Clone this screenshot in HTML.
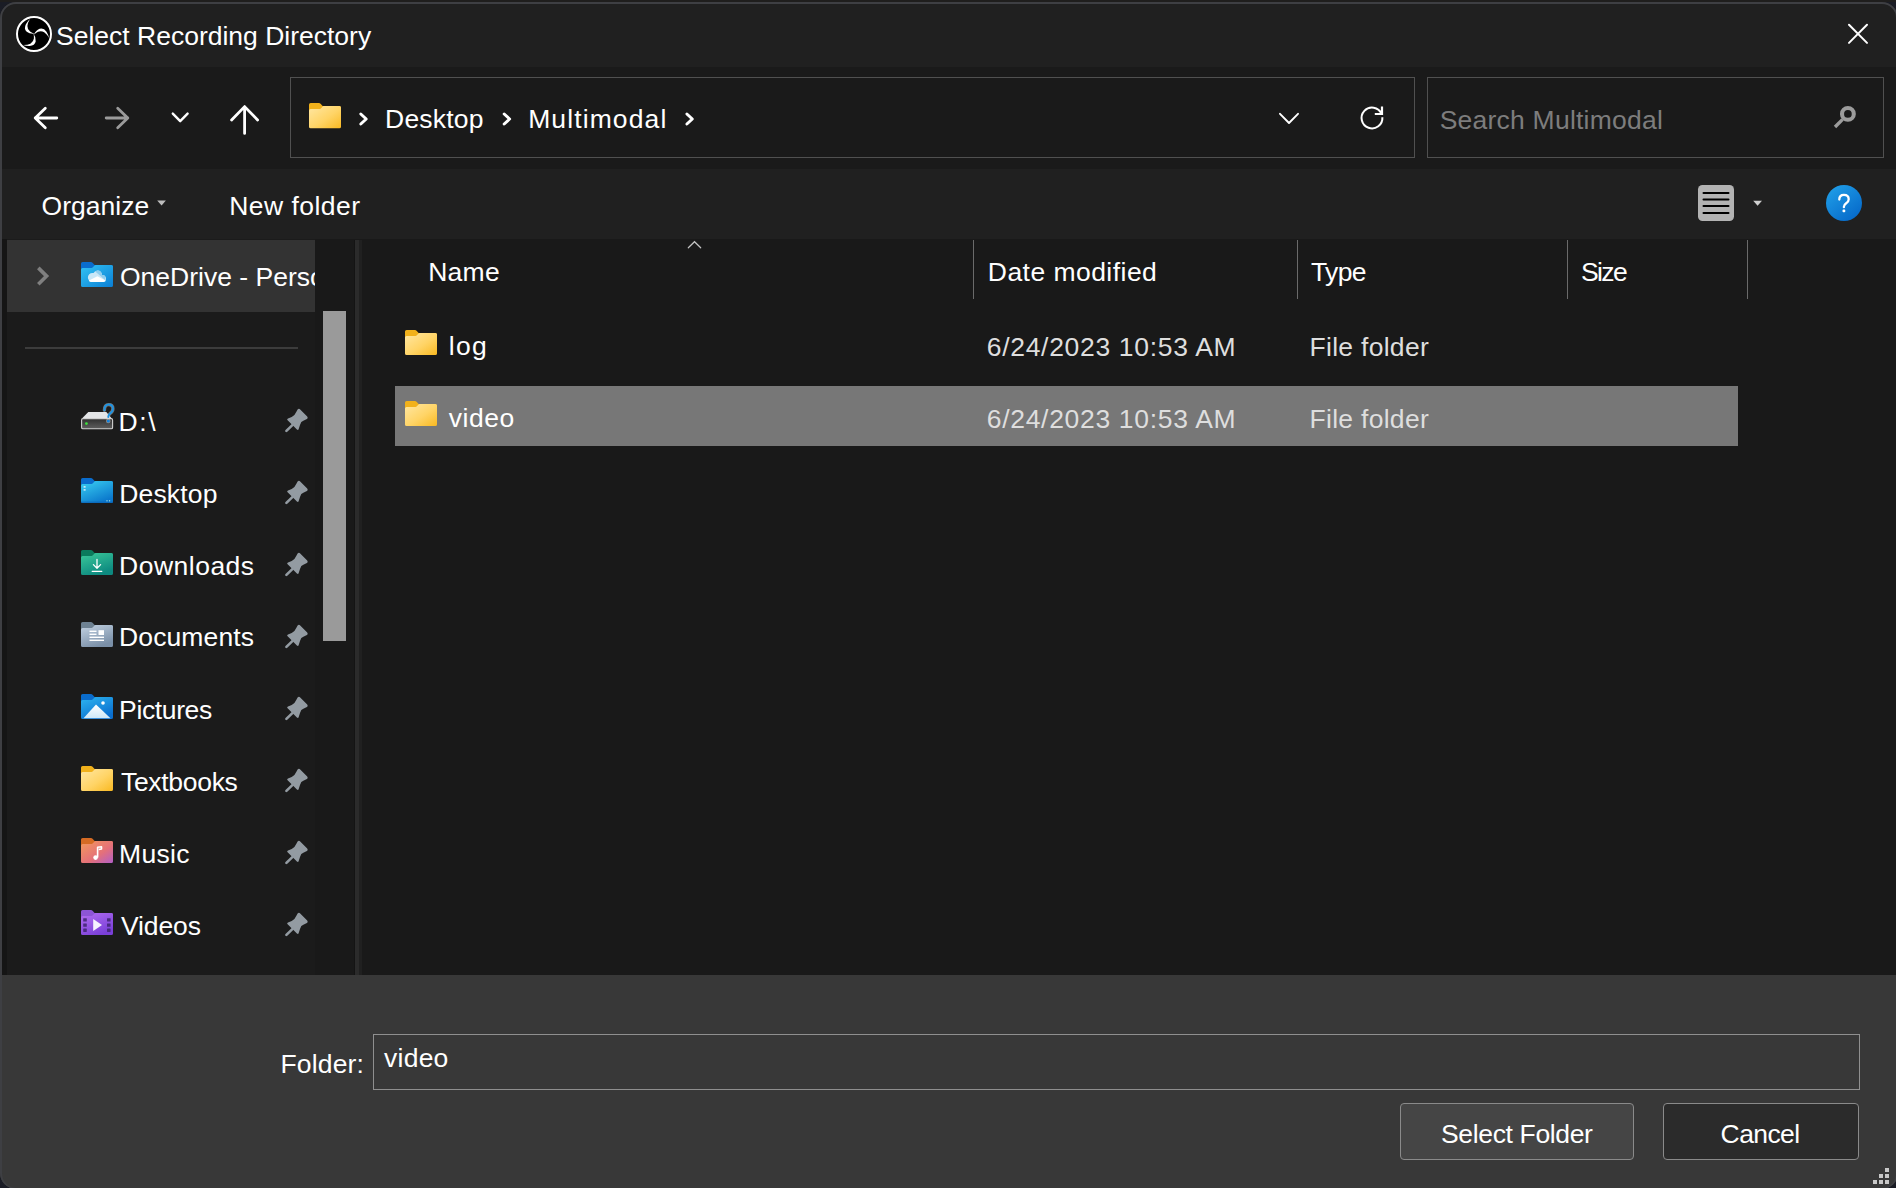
<!DOCTYPE html>
<html><head><meta charset="utf-8">
<style>
html,body{margin:0;padding:0;}
body{width:1896px;height:1188px;overflow:hidden;background:#1a1c25;position:relative;font-family:"Liberation Sans",sans-serif;}
.win{position:absolute;left:0;top:2px;width:1898px;height:1186.5px;border-radius:16px;background:#202020;overflow:hidden;}
.abs{position:absolute;}
.t{position:absolute;font-size:26.5px;line-height:30px;height:30px;color:#fff;white-space:nowrap;}
.g{color:#dedede;}
.band{position:absolute;left:0;width:1896px;}
svg{position:absolute;overflow:visible;}
</style></head><body>
<div class="win">
  <div class="band" style="top:0;height:65px;background:#202020;"></div>
  <div class="band" style="top:65px;height:102px;background:#1a1a1a;"></div>
  <div class="band" style="top:167px;height:70px;background:#202020;"></div>
  <div class="band" style="top:237px;height:736px;background:#191919;"></div>
  <div class="band" style="top:973px;height:230px;background:#383838;"></div>
</div>
<div class="abs" style="left:0;top:0;width:1896px;height:2px;background:#1f1e1d;"></div>
<div class="abs" style="left:0;top:2px;width:1898px;height:1186.5px;border-radius:16px;border:2px solid #3e3f43;border-bottom-width:0.6px;box-sizing:border-box;"></div>

<!-- ===== TITLE BAR ===== -->
<svg style="left:0;top:0" width="70" height="70" viewBox="0 0 70 70">
  <circle cx="34" cy="34" r="17" fill="#000" stroke="#fff" stroke-width="2"/>
  <g fill="#fff">
    <path id="bl" d="M33.4 33.6 Q36.3 37.5 35.7 41.4 Q34.8 45.6 29.6 45.9 Q26.2 46 23 45 Q27.4 45.1 30.4 43.7 Q33.5 42 33.9 38.6 Q34.2 36.4 33.4 33.6Z"/>
    <use href="#bl" transform="rotate(120 34 34)"/>
    <use href="#bl" transform="rotate(240 34 34)"/>
  </g>
</svg>
<div class="t" style="left:56px;top:21px;letter-spacing:0px;">Select Recording Directory</div>
<svg style="left:1840px;top:16px" width="36" height="36" viewBox="0 0 36 36">
  <path d="M9 8.7 L27 26.9 M27 8.7 L9 26.9" stroke="#fff" stroke-width="2" stroke-linecap="round"/>
</svg>

<!-- ===== NAV BAR ===== -->
<svg style="left:0;top:90px" width="280" height="60" viewBox="0 90 280 60">
  <g fill="none" stroke-width="2.6" stroke-linecap="round" stroke-linejoin="round">
    <path d="M35.2 118 H56.8 M45.3 108.2 L35.2 118 L45.3 127.8" stroke="#fff" stroke-width="2.8"/>
    <path d="M106.2 118 H127.8 M117.7 108.2 L127.8 118 L117.7 127.8" stroke="#9b9b9b" stroke-width="2.8"/>
    <path d="M172.8 113.6 L180.2 121.2 L187.6 113.6" stroke="#fff" stroke-width="2.4"/>
    <path d="M244.6 107 V133.4 M231.6 120 L244.6 106.6 L257.6 120" stroke="#fff" stroke-width="2.8"/>
  </g>
</svg>
<div class="abs" style="left:290px;top:77px;width:1123px;height:79px;border:1px solid #505050;"></div>
<div class="abs" style="left:1427px;top:77px;width:455px;height:79px;border:1px solid #505050;"></div>
<svg width="0" height="0" style="left:0;top:0">
  <defs>
    <linearGradient id="gy" x1="0" y1="0" x2="1" y2="1">
      <stop offset="0" stop-color="#ffe7a3"/><stop offset="0.55" stop-color="#ffd466"/><stop offset="1" stop-color="#f9b921"/>
    </linearGradient>
    <symbol id="fold" viewBox="0 0 32 25">
      <path d="M1.6 0 H9.8 Q11 0 11.8 0.9 L13.6 3 H30.4 Q32 3 32 4.6 V10 H0 V1.6 Q0 0 1.6 0Z" fill="#f1b11b"/>
      <path d="M0 7.6 Q0 6 1.6 6 H10.6 Q11.6 6 12.6 4.6 L13.2 3.8 Q13.8 3 14.8 3 H30.4 Q32 3 32 4.6 V23.4 Q32 25 30.4 25 H1.6 Q0 25 0 23.4Z" fill="url(#gy)"/>
    </symbol>
    <linearGradient id="gb" x1="0" y1="0" x2="1" y2="1">
      <stop offset="0" stop-color="#33c3f3"/><stop offset="1" stop-color="#0a7fd6"/>
    </linearGradient>
    <symbol id="foldb" viewBox="0 0 32 25">
      <path d="M1.6 0 H9.8 Q11 0 11.8 0.9 L13.6 3 H30.4 Q32 3 32 4.6 V10 H0 V1.6 Q0 0 1.6 0Z" fill="#0a6ccc"/>
      <path d="M0 7.6 Q0 6 1.6 6 H10.6 Q11.6 6 12.6 4.6 L13.2 3.8 Q13.8 3 14.8 3 H30.4 Q32 3 32 4.6 V23.4 Q32 25 30.4 25 H1.6 Q0 25 0 23.4Z" fill="url(#gb)"/>
    </symbol>
    <symbol id="pin" viewBox="0 0 40 40">
      <path d="M19.6 9.6 Q20.9 8.2 22.2 9.5 L29.2 16.6 Q30.5 18.1 28.9 19.1 Q25.6 20.4 23.3 22 Q21.8 25 20.7 29 Q20.2 30.6 18.9 29.5 L9.6 20.3 Q8.4 19 10 18.5 Q14 17.4 16.4 15 Q18.2 12.4 19.6 9.6Z" fill="#939ba2"/>
      <path d="M14.6 24.9 L8.4 30.9" stroke="#939ba2" stroke-width="2.6" stroke-linecap="round"/>
    </symbol>
  </defs>
</svg>

<!-- breadcrumb -->
<svg style="left:309px;top:103px" width="32" height="25.5" viewBox="0 0 32 25" preserveAspectRatio="none"><use href="#fold"/></svg>
<svg style="left:0;top:0" width="1896" height="200" viewBox="0 0 1896 200">
  <g fill="none" stroke="#fff" stroke-width="3" stroke-linecap="round" stroke-linejoin="round">
    <path d="M360.8 114 L366.2 119 L360.8 124"/>
    <path d="M504.2 114 L509.6 119 L504.2 124"/>
    <path d="M686.9 114 L692.3 119 L686.9 124"/>
  </g>
  <path d="M1280 113.8 L1289 123 L1298 113.8" fill="none" stroke="#fff" stroke-width="1.9" stroke-linecap="round" stroke-linejoin="round"/>
  <path d="M1382.37 117.27 A10.4 10.4 0 1 1 1381.50 113.77" fill="none" stroke="#fff" stroke-width="2"/>
  <path d="M1382 106.6 V114 H1374.8" fill="none" stroke="#fff" stroke-width="2.2" stroke-linecap="butt" stroke-linejoin="miter"/>
  <circle cx="1847.9" cy="113.9" r="5.9" fill="none" stroke="#9c9c9c" stroke-width="4.1"/>
  <path d="M1842.6 119.4 L1835 127" stroke="#9c9c9c" stroke-width="3.4" stroke-linecap="butt"/>
</svg>
<div class="t" style="left:385.1px;top:104px;letter-spacing:0.2px;">Desktop</div>
<div class="t" style="left:528.2px;top:104px;letter-spacing:1.11px;">Multimodal</div>
<div class="t" style="left:1439.7px;top:105px;color:#7d7d7d;letter-spacing:0.23px;">Search Multimodal</div>

<!-- ===== TOOLBAR ===== -->
<div class="t" style="left:41.6px;top:191px;letter-spacing:0px;">Organize</div>
<svg style="left:0;top:0" width="200" height="220"><path d="M157.2 200.6 H165.9 L161.55 205.6Z" fill="#bdbdbd"/></svg>
<div class="t" style="left:229.2px;top:191px;letter-spacing:0.47px;">New folder</div>
<svg style="left:1690px;top:180px" width="200" height="50" viewBox="1690 180 200 50">
  <rect x="1698" y="185" width="36" height="36" rx="4.5" fill="#b3b3b3"/>
  <g stroke="#000" stroke-width="2" stroke-linecap="round">
    <path d="M1703.5 192.9 H1728.5 M1703.5 199.5 H1728.5 M1703.5 206.1 H1728.5 M1703.5 212.9 H1728.5"/>
  </g>
  <path d="M1753.2 200.8 H1762 L1757.6 205.8Z" fill="#cfcfcf"/>
  <defs><linearGradient id="hb" x1="0" y1="0" x2="0.8" y2="1"><stop offset="0" stop-color="#22a3ea"/><stop offset="1" stop-color="#0568c9"/></linearGradient></defs>
  <circle cx="1844" cy="203" r="18" fill="url(#hb)"/>
  <path d="M1839.3 199.6 Q1839.3 194.8 1843.9 194.8 Q1848.7 194.8 1848.7 199.2 Q1848.7 201.6 1846.2 203.3 Q1844 204.8 1843.9 206.8 V207.2" fill="none" stroke="#fff" stroke-width="2.3" stroke-linecap="round"/>
  <rect x="1842.5" y="209.6" width="2.8" height="2.6" rx="0.9" fill="#fff"/>
</svg>

<!-- ===== NAV PANE ===== -->
<div class="abs" style="left:2px;top:239px;width:5px;height:736px;background:#151515;"></div>
<div class="abs" style="left:7px;top:239px;width:308px;height:736px;background:#1b1b1b;"></div>
<div class="abs" style="left:7px;top:240px;width:308px;height:71.5px;background:#333333;"></div>
<svg style="left:0;top:0" width="60" height="300"><path d="M38.3 267.9 L46.6 276.1 L38.3 284.3" fill="none" stroke="#7f7f7f" stroke-width="3.6" stroke-linecap="butt" stroke-linejoin="miter"/></svg>
<svg style="left:81px;top:262px" width="32" height="25" viewBox="0 0 32 25">
  <use href="#foldb"/>
  <defs><clipPath id="cl"><circle cx="11.4" cy="15.4" r="4.5"/><circle cx="16.6" cy="12.8" r="4.4"/><circle cx="21.4" cy="16.4" r="3.5"/><rect x="7.6" y="15" width="17.3" height="4.9" rx="2.4"/></clipPath></defs>
  <g clip-path="url(#cl)">
    <rect x="0" y="0" width="32" height="25" fill="#c9e7f7"/>
    <path d="M12.5 8 L24 8 L24 18 Z" fill="#8fcdee"/>
    <path d="M4 20.5 L16.4 14.2 L28 20.5Z" fill="#fff"/>
  </g>
</svg>
<div class="abs" style="left:120px;top:262px;width:195px;height:30px;overflow:hidden;"><div class="t" style="left:0;top:0;">OneDrive - Personal</div></div>
<div class="abs" style="left:25px;top:347px;width:273px;height:1.5px;background:#3c3c3c;"></div>
<div class="abs" style="left:323px;top:311px;width:23px;height:329.5px;background:#9a9a9a;"></div>
<div class="abs" style="left:353.5px;top:240px;width:1.5px;height:735px;background:#141414;"></div>
<div class="abs" style="left:355px;top:240px;width:4px;height:735px;background:#2b2b2b;"></div>
<div class="abs" style="left:359px;top:240px;width:3px;height:735px;background:#202020;"></div>

<!-- D drive -->
<svg style="left:75px;top:398px" width="45" height="40" viewBox="0 0 45 40">
  <defs><linearGradient id="dg" x1="0" y1="0" x2="0" y2="1"><stop offset="0" stop-color="#2f2f2f"/><stop offset="1" stop-color="#5e5e5e"/></linearGradient></defs>
  <path d="M13.3 14 H31.3 L37 20.8 H6.7Z" fill="#e4e5e7"/>
  <rect x="6.6" y="20.6" width="31" height="10.2" rx="1.3" fill="url(#dg)" stroke="#cfcfcf" stroke-width="1.1"/>
  <circle cx="11.4" cy="25.6" r="1.4" fill="#3be13b"/>
  <path d="M29.4 12.2 Q29.4 6.6 33.6 6.6 Q37.9 6.6 37.9 10.8 Q37.9 13.6 35.2 15.4 Q33.3 16.7 33.3 19" fill="none" stroke="#e8ddd4" stroke-width="3.4" stroke-linecap="round" opacity="0.45"/>
  <path d="M29.4 12.2 Q29.4 6.6 33.6 6.6 Q37.9 6.6 37.9 10.8 Q37.9 13.6 35.2 15.4 Q33.3 16.7 33.3 19" fill="none" stroke="#1d93e3" stroke-width="2" stroke-linecap="round"/>
  <circle cx="33.3" cy="23" r="2.3" fill="#e8ddd4" opacity="0.5"/><circle cx="33.3" cy="23" r="1.5" fill="#0f7fdc"/>
</svg>
<div class="t" style="left:118.6px;top:407px;letter-spacing:1.55px;">D:\</div>

<!-- Desktop -->
<svg style="left:81px;top:478px" width="32" height="25" viewBox="0 0 32 25">
  <defs><linearGradient id="gd" x1="0" y1="0" x2="0.6" y2="1"><stop offset="0" stop-color="#3ad0f2"/><stop offset="1" stop-color="#0b78cc"/></linearGradient></defs>
  <path d="M1.6 0 H9.8 Q11 0 11.8 0.9 L13.6 3 H30.4 Q32 3 32 4.6 V10 H0 V1.6 Q0 0 1.6 0Z" fill="#0a6ccc"/>
  <path d="M0 7.6 Q0 6 1.6 6 H10.6 Q11.6 6 12.6 4.6 L13.2 3.8 Q13.8 3 14.8 3 H30.4 Q32 3 32 4.6 V23.4 Q32 25 30.4 25 H1.6 Q0 25 0 23.4Z" fill="url(#gd)"/>
  <rect x="2.6" y="8.2" width="2" height="1.4" fill="#e8f6fd"/><rect x="2.6" y="11.2" width="2" height="1.4" fill="#e8f6fd"/>
  <rect x="25.4" y="22.4" width="1.2" height="1" fill="#cfe"/><rect x="28" y="22.4" width="1.2" height="1" fill="#cfe"/>
  <rect x="0" y="23.6" width="32" height="1.4" fill="#0a5fb0" opacity="0.6"/>
</svg>
<div class="t" style="left:119.2px;top:479px;letter-spacing:0.17px;">Desktop</div>

<!-- Downloads -->
<svg style="left:81px;top:550px" width="32" height="25" viewBox="0 0 32 25">
  <defs><linearGradient id="gdl" x1="0" y1="0" x2="0.5" y2="1"><stop offset="0" stop-color="#3cc99a"/><stop offset="1" stop-color="#0d8a80"/></linearGradient></defs>
  <path d="M1.6 0 H9.8 Q11 0 11.8 0.9 L13.6 3 H30.4 Q32 3 32 4.6 V10 H0 V1.6 Q0 0 1.6 0Z" fill="#0b7a5c"/>
  <path d="M0 7.6 Q0 6 1.6 6 H10.6 Q11.6 6 12.6 4.6 L13.2 3.8 Q13.8 3 14.8 3 H30.4 Q32 3 32 4.6 V23.4 Q32 25 30.4 25 H1.6 Q0 25 0 23.4Z" fill="url(#gdl)"/>
  <path d="M16 9.5 V18 M12.4 14.6 L16 18.2 L19.6 14.6 M11.2 21.3 H20.8" fill="none" stroke="#fff" stroke-width="1.3" stroke-linecap="round" stroke-linejoin="round"/>
</svg>
<div class="t" style="left:119px;top:551px;letter-spacing:0.5px;">Downloads</div>

<!-- Documents -->
<svg style="left:81px;top:622px" width="32" height="25" viewBox="0 0 32 25">
  <defs><linearGradient id="gdc" x1="0" y1="0" x2="0.5" y2="1"><stop offset="0" stop-color="#c4d3e3"/><stop offset="1" stop-color="#7b90a8"/></linearGradient></defs>
  <path d="M1.6 0 H9.8 Q11 0 11.8 0.9 L13.6 3 H30.4 Q32 3 32 4.6 V10 H0 V1.6 Q0 0 1.6 0Z" fill="#6e8293"/>
  <path d="M0 7.6 Q0 6 1.6 6 H10.6 Q11.6 6 12.6 4.6 L13.2 3.8 Q13.8 3 14.8 3 H30.4 Q32 3 32 4.6 V23.4 Q32 25 30.4 25 H1.6 Q0 25 0 23.4Z" fill="url(#gdc)"/>
  <g fill="#fff"><rect x="8.5" y="8.6" width="7" height="1.4"/><rect x="8.5" y="11.6" width="7" height="1.4"/><rect x="17.5" y="8.2" width="5.5" height="4.8"/><rect x="8.5" y="14.6" width="14.5" height="1.4"/><rect x="8.5" y="17.6" width="14.5" height="1.4"/></g>
</svg>
<div class="t" style="left:119px;top:622px;letter-spacing:0.125px;">Documents</div>

<!-- Pictures -->
<svg style="left:81px;top:694px" width="32" height="25" viewBox="0 0 32 25">
  <defs><linearGradient id="gp" x1="0" y1="0" x2="0.6" y2="1"><stop offset="0" stop-color="#2eb6f0"/><stop offset="1" stop-color="#0a6fd0"/></linearGradient>
  <linearGradient id="gm" x1="0" y1="0" x2="0" y2="1"><stop offset="0" stop-color="#ffffff"/><stop offset="1" stop-color="#cfe8f8"/></linearGradient></defs>
  <path d="M1.6 0 H9.8 Q11 0 11.8 0.9 L13.6 3 H30.4 Q32 3 32 4.6 V10 H0 V1.6 Q0 0 1.6 0Z" fill="#0a6ccc"/>
  <path d="M0 7.6 Q0 6 1.6 6 H10.6 Q11.6 6 12.6 4.6 L13.2 3.8 Q13.8 3 14.8 3 H30.4 Q32 3 32 4.6 V23.4 Q32 25 30.4 25 H1.6 Q0 25 0 23.4Z" fill="url(#gp)"/>
  <path d="M2.5 24.2 L15 10.5 L29.5 24.2Z" fill="url(#gm)"/>
  <circle cx="22" cy="9" r="1.8" fill="#fff"/>
</svg>
<div class="t" style="left:119.1px;top:695px;letter-spacing:-0.37px;">Pictures</div>

<!-- Textbooks -->
<svg style="left:81px;top:766px" width="32" height="25" viewBox="0 0 32 25"><use href="#fold"/></svg>
<div class="t" style="left:121px;top:767px;letter-spacing:-0.31px;">Textbooks</div>

<!-- Music -->
<svg style="left:81px;top:838px" width="32" height="25" viewBox="0 0 32 25">
  <defs><linearGradient id="gmu" x1="0" y1="0" x2="1" y2="1"><stop offset="0" stop-color="#f39a5a"/><stop offset="0.6" stop-color="#e4707a"/><stop offset="1" stop-color="#b25fc8"/></linearGradient></defs>
  <path d="M1.6 0 H9.8 Q11 0 11.8 0.9 L13.6 3 H30.4 Q32 3 32 4.6 V10 H0 V1.6 Q0 0 1.6 0Z" fill="#d56b24"/>
  <path d="M0 7.6 Q0 6 1.6 6 H10.6 Q11.6 6 12.6 4.6 L13.2 3.8 Q13.8 3 14.8 3 H30.4 Q32 3 32 4.6 V23.4 Q32 25 30.4 25 H1.6 Q0 25 0 23.4Z" fill="url(#gmu)"/>
  <path d="M16.6 19.5 V9.2 L20.5 8.8 V11 L17.8 11.5" fill="none" stroke="#fff" stroke-width="1.6" stroke-linejoin="round"/>
  <circle cx="14.6" cy="19.6" r="2.3" fill="#fff"/>
</svg>
<div class="t" style="left:119px;top:839px;letter-spacing:0.33px;">Music</div>

<!-- Videos -->
<svg style="left:81px;top:910px" width="32" height="25" viewBox="0 0 32 25">
  <defs><linearGradient id="gv" x1="0" y1="0" x2="0.6" y2="1"><stop offset="0" stop-color="#b36ff0"/><stop offset="1" stop-color="#7a3fd8"/></linearGradient></defs>
  <path d="M1.6 0 H9.8 Q11 0 11.8 0.9 L13.6 3 H30.4 Q32 3 32 4.6 V10 H0 V1.6 Q0 0 1.6 0Z" fill="#8d55d6"/>
  <path d="M0 7.6 Q0 6 1.6 6 H10.6 Q11.6 6 12.6 4.6 L13.2 3.8 Q13.8 3 14.8 3 H30.4 Q32 3 32 4.6 V23.4 Q32 25 30.4 25 H1.6 Q0 25 0 23.4Z" fill="url(#gv)"/>
  <g fill="#3f2470" opacity="0.85"><rect x="2.2" y="8.2" width="3.6" height="3.4" rx="0.4"/><rect x="2.2" y="13.4" width="3.6" height="3.4" rx="0.4"/><rect x="2.2" y="18.6" width="3.6" height="3.4" rx="0.4"/><rect x="26" y="8.2" width="3.6" height="3.4" rx="0.4"/><rect x="26" y="13.4" width="3.6" height="3.4" rx="0.4"/><rect x="26" y="18.6" width="3.6" height="3.4" rx="0.4"/></g>
  <path d="M12.2 9 L21 15 L12.2 21Z" fill="#f6f2ff"/>
</svg>
<div class="t" style="left:121px;top:911px;letter-spacing:-0.12px;">Videos</div>

<!-- pins -->
<svg style="left:278px;top:400px" width="40" height="40"><use href="#pin"/></svg>
<svg style="left:278px;top:472px" width="40" height="40"><use href="#pin"/></svg>
<svg style="left:278px;top:544px" width="40" height="40"><use href="#pin"/></svg>
<svg style="left:278px;top:616px" width="40" height="40"><use href="#pin"/></svg>
<svg style="left:278px;top:688px" width="40" height="40"><use href="#pin"/></svg>
<svg style="left:278px;top:760px" width="40" height="40"><use href="#pin"/></svg>
<svg style="left:278px;top:832px" width="40" height="40"><use href="#pin"/></svg>
<svg style="left:278px;top:904px" width="40" height="40"><use href="#pin"/></svg>

<!-- ===== CONTENT ===== -->
<svg style="left:0;top:0" width="1896" height="320">
  <path d="M688.3 247.8 L694.5 241.7 L700.7 247.8" fill="none" stroke="#c4c4c4" stroke-width="1.2" stroke-linecap="round"/>
  <g fill="#6a6a6a"><rect x="973" y="240" width="1" height="59"/><rect x="1297" y="240" width="1" height="59"/><rect x="1567" y="240" width="1" height="59"/><rect x="1747" y="240" width="1" height="59"/></g>
</svg>
<div class="t" style="left:428.2px;top:257px;letter-spacing:0.27px;">Name</div>
<div class="t" style="left:987.8px;top:257px;letter-spacing:0.46px;">Date modified</div>
<div class="t" style="left:1311px;top:257px;letter-spacing:-0.67px;">Type</div>
<div class="t" style="left:1581px;top:257px;letter-spacing:-1.6px;">Size</div>

<svg style="left:405px;top:329.5px" width="32" height="25" viewBox="0 0 32 25"><use href="#fold"/></svg>
<div class="t" style="left:448.7px;top:331px;letter-spacing:1.35px;">log</div>
<div class="t g" style="left:986.8px;top:332px;letter-spacing:0.68px;">6/24/2023 10:53 AM</div>
<div class="t g" style="left:1309.5px;top:332px;letter-spacing:0.29px;">File folder</div>

<div class="abs" style="left:395px;top:386px;width:1343px;height:60px;background:#777777;"></div>
<svg style="left:405px;top:401px" width="32" height="25" viewBox="0 0 32 25"><use href="#fold"/></svg>
<div class="t" style="left:448.8px;top:403px;letter-spacing:0.55px;">video</div>
<div class="t g" style="left:986.8px;top:404px;letter-spacing:0.68px;">6/24/2023 10:53 AM</div>
<div class="t g" style="left:1309.5px;top:404px;letter-spacing:0.29px;">File folder</div>

<!-- ===== BOTTOM ===== -->
<div class="t" style="left:280.4px;top:1049px;letter-spacing:0.18px;">Folder:</div>
<div class="abs" style="left:373px;top:1034px;width:1485px;height:54px;border:1px solid #8f8f8f;"></div>
<div class="t" style="left:384px;top:1043px;letter-spacing:0.25px;">video</div>
<div class="abs" style="left:1400px;top:1103px;width:232px;height:55px;border:1px solid #8a8a8a;border-radius:4px;background:#454545;"></div>
<div class="t" style="left:1441px;top:1119px;letter-spacing:-0.35px;">Select Folder</div>
<div class="abs" style="left:1663px;top:1103px;width:194px;height:55px;border:1px solid #8a8a8a;border-radius:4px;background:#2b2b2b;"></div>
<div class="t" style="left:1720.6px;top:1119px;letter-spacing:-0.6px;">Cancel</div>
<svg style="left:0;top:0" width="1896" height="1188">
  <g fill="#c8c8c8"><rect x="1885" y="1168" width="4" height="4"/><rect x="1879" y="1174" width="4" height="4"/><rect x="1885" y="1174" width="4" height="4"/><rect x="1873" y="1180" width="4" height="4"/><rect x="1879" y="1180" width="4" height="4"/><rect x="1885" y="1180" width="4" height="4"/></g>
</svg>
</body></html>
